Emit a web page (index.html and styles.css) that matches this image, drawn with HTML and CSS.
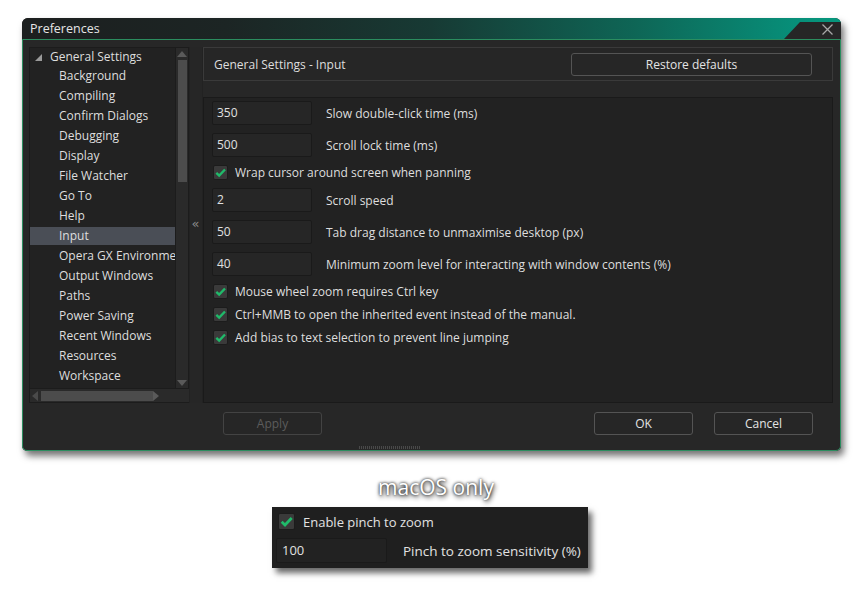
FILE: index.html
```html
<!DOCTYPE html>
<html>
<head>
<meta charset="utf-8">
<link rel="stylesheet" href="styles.css">
</head>
<body>
<div class="page">
  <div class="window">
    <div class="titlebar">
      <span class="title">Preferences</span>
      <div class="closetab">
        <svg class="xicon" width="13" height="13" viewBox="0 0 13 13"><path d="M1.5 1.5 L11.5 11.5 M11.5 1.5 L1.5 11.5" stroke="#a8a8a8" stroke-width="1.3" fill="none"/></svg>
      </div>
    </div>
    <div class="wbody">
      <div class="main">
        <div class="tree">
          <div class="tree-top">
            <div class="tree-list">
              <div class="trow root"><span class="tri"></span>General Settings</div>
              <div class="trow child">Background</div>
              <div class="trow child">Compiling</div>
              <div class="trow child">Confirm Dialogs</div>
              <div class="trow child">Debugging</div>
              <div class="trow child">Display</div>
              <div class="trow child">File Watcher</div>
              <div class="trow child">Go To</div>
              <div class="trow child">Help</div>
              <div class="trow child sel">Input</div>
              <div class="trow child">Opera GX Environment</div>
              <div class="trow child">Output Windows</div>
              <div class="trow child">Paths</div>
              <div class="trow child">Power Saving</div>
              <div class="trow child">Recent Windows</div>
              <div class="trow child">Resources</div>
              <div class="trow child">Workspace</div>
            </div>
            <div class="vscroll">
              <span class="arr up"></span>
              <div class="vthumb"></div>
              <span class="arr down"></span>
            </div>
          </div>
          <div class="tree-bottom">
            <div class="hscroll">
              <span class="arr left"></span>
              <div class="hthumb"></div>
              <span class="arr right"></span>
            </div>
            <div class="corner"></div>
          </div>
        </div>
        <div class="splitter"><span class="chev">«</span></div>
        <div class="right">
          <div class="header">
            <span class="htitle">General Settings - Input</span>
            <div class="btn restore">Restore defaults</div>
          </div>
          <div class="content">
            <div class="row"><div class="field">350</div><span class="lbl">Slow double-click time (ms)</span></div>
            <div class="row"><div class="field">500</div><span class="lbl">Scroll lock time (ms)</span></div>
            <div class="crow"><span class="cb"><svg width="13" height="13" viewBox="0 0 13 13"><path d="M2.3 6.8 L5.2 9.6 L11 3.5" stroke="#20ba6a" stroke-width="2.4" fill="none"/></svg></span><span>Wrap cursor around screen when panning</span></div>
            <div class="row"><div class="field">2</div><span class="lbl">Scroll speed</span></div>
            <div class="row"><div class="field">50</div><span class="lbl">Tab drag distance to unmaximise desktop (px)</span></div>
            <div class="row"><div class="field">40</div><span class="lbl">Minimum zoom level for interacting with window contents (%)</span></div>
            <div class="crow"><span class="cb"><svg width="13" height="13" viewBox="0 0 13 13"><path d="M2.3 6.8 L5.2 9.6 L11 3.5" stroke="#20ba6a" stroke-width="2.4" fill="none"/></svg></span><span>Mouse wheel zoom requires Ctrl key</span></div>
            <div class="crow"><span class="cb"><svg width="13" height="13" viewBox="0 0 13 13"><path d="M2.3 6.8 L5.2 9.6 L11 3.5" stroke="#20ba6a" stroke-width="2.4" fill="none"/></svg></span><span>Ctrl+MMB to open the inherited event instead of the manual.</span></div>
            <div class="crow"><span class="cb"><svg width="13" height="13" viewBox="0 0 13 13"><path d="M2.3 6.8 L5.2 9.6 L11 3.5" stroke="#20ba6a" stroke-width="2.4" fill="none"/></svg></span><span>Add bias to text selection to prevent line jumping</span></div>
          </div>
        </div>
      </div>
      <div class="buttons">
        <div class="btn disabled">Apply</div>
        <div class="spacer"></div>
        <div class="btn">OK</div>
        <div class="btn">Cancel</div>
      </div>
      <div class="grip"></div>
    </div>
  </div>

  <div class="mac">
    <div class="mac-title">macOS only</div>
    <div class="mac-panel">
      <div class="mcrow"><span class="cb big"><svg width="15" height="15" viewBox="0 0 13 13"><path d="M2.3 6.8 L5.2 9.6 L11 3.5" stroke="#20ba6a" stroke-width="2.4" fill="none"/></svg></span><span>Enable pinch to zoom</span></div>
      <div class="mrow"><div class="field mfield">100</div><span class="mlbl">Pinch to zoom sensitivity (%)</span></div>
    </div>
  </div>
</div>
</body>
</html>
```

FILE: styles.css
```css
* { box-sizing: border-box; }
html, body { margin: 0; padding: 0; background: #ffffff; }
body { font-family: "Open Sans", "Noto Sans", sans-serif; font-size: 12px; color: #dcdcdc; }

.page { width: 860px; height: 602px; padding-top: 18px; }

.window {
  margin-left: 22px;
  width: 819px;
  height: 433px;
  display: flex;
  flex-direction: column;
  border-radius: 6px 6px 5px 5px;
  box-shadow: 3px 5px 7px rgba(0,0,0,0.55);
  background: #272727;
}

.titlebar {
  height: 21px;
  display: flex;
  align-items: stretch;
  border-radius: 6px 6px 0 0;
  background: linear-gradient(to right, #1c1f1f 0%, #1c2524 25%, #173a34 50%, #0e6656 75%, #07907a 95%, #06977c 100%);
  overflow: hidden;
}
.title { flex: 1; padding-left: 8px; line-height: 21px; font-size: 12.5px; color: #e6e6e6; }
.closetab {
  width: 57px;
  margin-top: 4px;
  background: #262626;
  clip-path: polygon(16px 0, 100% 0, 100% 100%, 0 100%);
  display: flex;
  justify-content: flex-end;
  align-items: flex-start;
  padding-right: 7px;
}
.xicon { margin-top: 1px; }

.wbody {
  flex: 1;
  border: 1px solid #2b8d5f;
  border-radius: 0 0 5px 5px;
  padding: 7px 7px 0 6px;
  display: flex;
  flex-direction: column;
}

.main { display: flex; height: 356px; }

.tree {
  width: 160px;
  display: flex;
  flex-direction: column;
  border: 1px solid #1c1c1c;
  background: #222222;
}
.tree-top { flex: 1; display: flex; min-height: 0; }
.tree-list { flex: 1; overflow: hidden; white-space: nowrap; }
.trow { height: 20px; line-height: 20px; font-size: 12px; color: #dedede; }
.trow.root { height: 18px; line-height: 18px; padding-left: 5px; display: flex; align-items: center; }
.tri {
  width: 0; height: 0;
  border-left: 7px solid transparent;
  border-bottom: 7px solid #9a9a9a;
  margin-right: 8px;
}
.trow.child { padding-left: 29px; }
.trow.sel { background: #4a4e56; height: 18px; line-height: 18px; margin: 1px 0; }

.vscroll {
  width: 13px;
  background: #2a2a2a;
  border-left: 1px solid #1c1c1c;
  display: flex;
  flex-direction: column;
  align-items: center;
}
.arr { width: 0; height: 0; display: block; }
.arr.up { border-left: 5px solid transparent; border-right: 5px solid transparent; border-bottom: 6px solid #5a5a5a; margin-top: 3px; }
.arr.down { border-left: 5px solid transparent; border-right: 5px solid transparent; border-top: 6px solid #5a5a5a; margin-top: auto; margin-bottom: 2px; }
.vthumb { width: 9px; height: 122px; background: #4c4c4c; margin-top: 3px; }

.tree-bottom { height: 14px; display: flex; }
.hscroll {
  flex: 1;
  background: #2a2a2a;
  border-top: 1px solid #1c1c1c;
  display: flex;
  align-items: center;
}
.arr.left { border-top: 5px solid transparent; border-bottom: 5px solid transparent; border-right: 6px solid #4a4a4a; margin-left: 2px; }
.arr.right { border-top: 5px solid transparent; border-bottom: 5px solid transparent; border-left: 6px solid #5a5a5a; margin-left: auto; margin-right: 2px; }
.hthumb { width: 112px; height: 10px; background: #4c4c4c; margin-left: 3px; }
.corner { width: 13px; background: #000000; }

.splitter {
  width: 14px;
  display: flex;
  align-items: center;
  justify-content: center;
  border-left: 1px solid #222;
  border-right: 1px solid #222;
  background: #262626;
  padding-bottom: 4px;
  padding-right: 2px;
}
.chev { color: #8a8a8a; font-size: 13px; line-height: 1; font-family: "DejaVu Sans", sans-serif; letter-spacing: -1px; }

.right { width: 630px; display: flex; flex-direction: column; gap: 16px; }

.header {
  height: 34px;
  border: 1px solid #3a3a3a;
  background: #262626;
  display: flex;
  align-items: center;
  padding: 0 20px 0 10px;
  justify-content: space-between;
}
.htitle { font-size: 12px; color: #dedede; }

.btn {
  height: 23px;
  width: 100px;
  border: 1px solid #545454;
  border-radius: 3px;
  background: #262626;
  color: #e4e4e4;
  font-size: 12px;
  display: flex;
  align-items: center;
  justify-content: center;
}
.btn.restore { width: 241px; }
.btn.disabled { color: #5c5c5c; border-color: #434343; }

.content {
  flex: 1;
  background: #222222;
  border: 1px solid #1a1a1a;
  padding: 3px 8px 0 8px;
  display: flex;
  flex-direction: column;
  gap: 8px;
}
.row { display: flex; align-items: center; height: 24px; }
.field {
  width: 100px;
  height: 24px;
  background: #262626;
  border: 1px solid #1a1a1a;
  border-radius: 2px;
  padding-left: 4px;
  line-height: 22px;
  font-size: 12px;
  color: #e0e0e0;
}
.lbl { margin-left: 14px; font-size: 12px; color: #dedede; }
.crow { display: flex; align-items: center; height: 15px; font-size: 12px; color: #dedede; }
.cb {
  width: 15px; height: 15px;
  margin-left: 1px;
  margin-right: 7px;
  background: #3a3a3a;
  border: 1px solid #1c1c1c;
  border-radius: 2px;
  display: flex;
  align-items: center;
  justify-content: center;
}

.buttons {
  margin-top: 9px;
  padding-left: 194px;
  padding-right: 20px;
  display: flex;
  gap: 21px;
}
.spacer { flex: 1; }
.buttons .btn { width: 99px; }

.grip {
  width: 62px;
  height: 3px;
  margin: 11px 0 0 330px;
  background: repeating-linear-gradient(to right, #4a4a4a 0 1px, transparent 1px 2px);
}

.mac { display: flex; flex-direction: column; align-items: center; margin-top: 23px; }
.mac-title {
  font-size: 21px;
  color: #ffffff;
  line-height: 26px;
  text-shadow: 0 0 3px #000, 1px 2px 5px rgba(0,0,0,0.9);
  margin-left: 12px;
}
.mac-panel {
  margin-top: 7px;
  width: 316px;
  height: 61px;
  background: #1f1f1f;
  box-shadow: 4px 5px 6px rgba(0,0,0,0.6);
  padding: 6px 6px 0 4px;
  display: flex;
  flex-direction: column;
  gap: 8px;
  font-size: 13px;
  color: #e2e2e2;
  white-space: nowrap;
}
.mcrow { display: flex; align-items: center; height: 17px; padding-left: 2px; }
.cb.big { width: 17px; height: 17px; margin-left: 0; margin-right: 8px; }
.mrow { display: flex; align-items: center; }
.mfield { width: 111px; height: 25px; font-size: 13px; line-height: 23px; background: #222; padding-left: 5px; }
.mlbl { margin-left: 16px; font-size: 13.5px; }
```
